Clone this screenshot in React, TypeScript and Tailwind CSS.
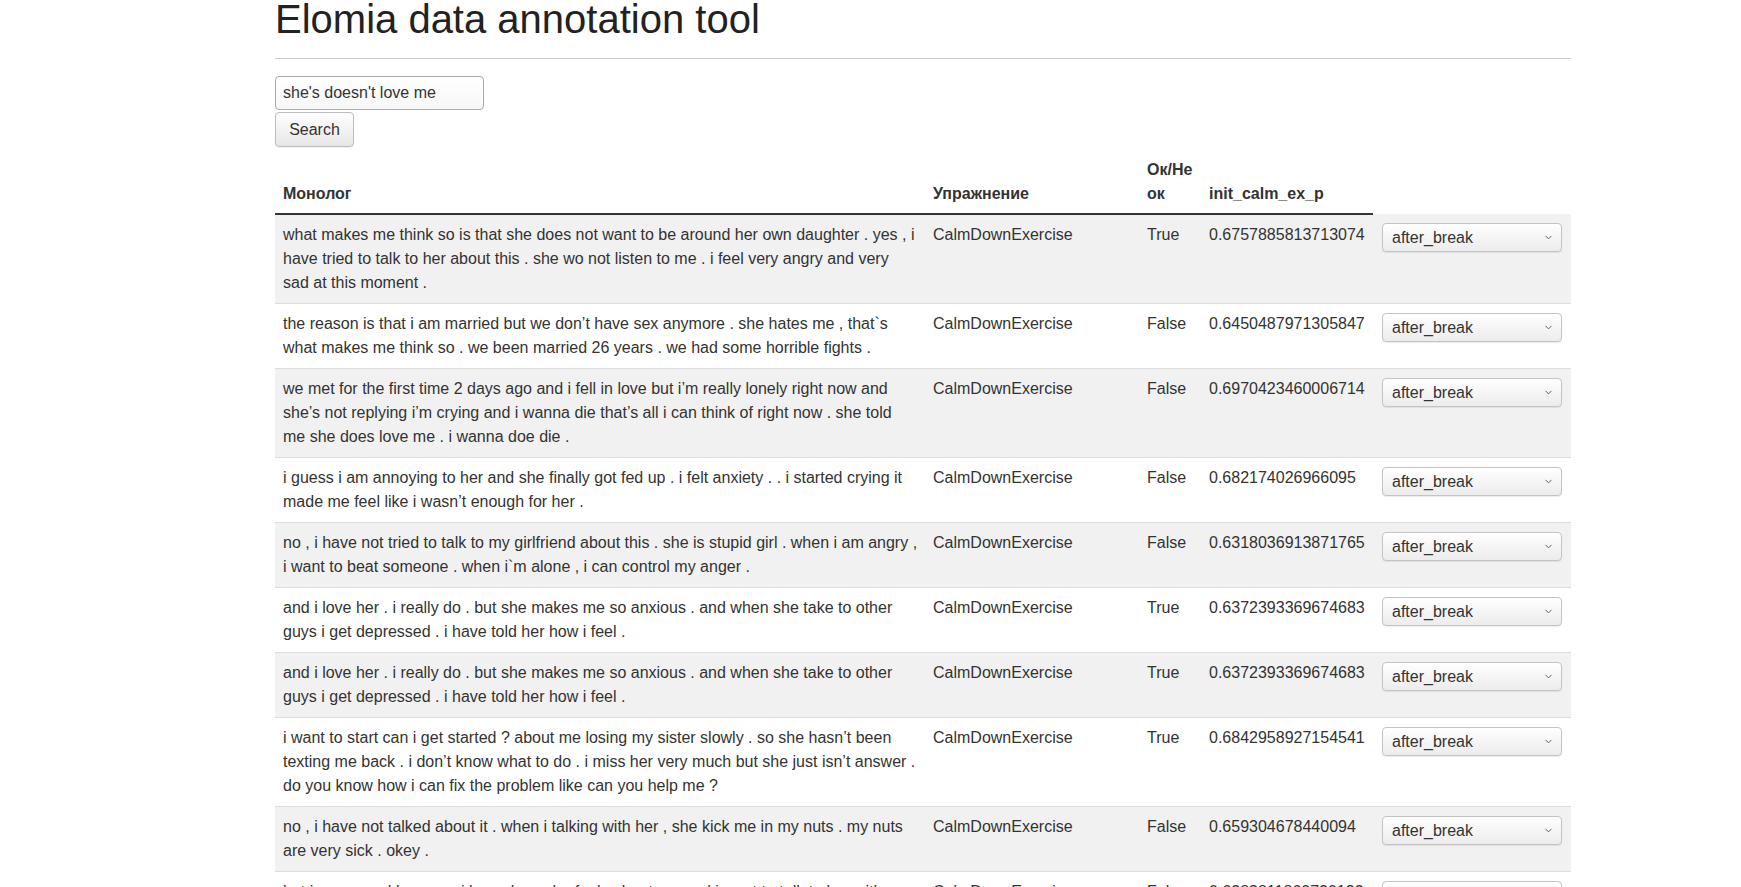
import { ChevronDown } from "lucide-react";

const rows = [
  {
    text: "what makes me think so is that she does not want to be around her own daughter . yes , i have tried to talk to her about this . she wo not listen to me . i feel very angry and very sad at this moment .",
    ok: "True",
    p: "0.6757885813713074",
  },
  {
    text: "the reason is that i am married but we don’t have sex anymore . she hates me , that`s what makes me think so . we been married 26 years . we had some horrible fights .",
    ok: "False",
    p: "0.6450487971305847",
  },
  {
    text: "we met for the first time 2 days ago and i fell in love but i’m really lonely right now and she’s not replying i’m crying and i wanna die that’s all i can think of right now . she told me she does love me . i wanna doe die .",
    ok: "False",
    p: "0.6970423460006714",
  },
  {
    text: "i guess i am annoying to her and she finally got fed up . i felt anxiety . . i started crying it made me feel like i wasn’t enough for her .",
    ok: "False",
    p: "0.682174026966095",
  },
  {
    text: "no , i have not tried to talk to my girlfriend about this . she is stupid girl . when i am angry , i want to beat someone . when i`m alone , i can control my anger .",
    ok: "False",
    p: "0.6318036913871765",
  },
  {
    text: "and i love her . i really do . but she makes me so anxious . and when she take to other guys i get depressed . i have told her how i feel .",
    ok: "True",
    p: "0.6372393369674683",
  },
  {
    text: "and i love her . i really do . but she makes me so anxious . and when she take to other guys i get depressed . i have told her how i feel .",
    ok: "True",
    p: "0.6372393369674683",
  },
  {
    text: "i want to start can i get started ? about me losing my sister slowly . so she hasn’t been texting me back . i don’t know what to do . i miss her very much but she just isn’t answer . do you know how i can fix the problem like can you help me ?",
    ok: "True",
    p: "0.6842958927154541",
  },
  {
    text: "no , i have not talked about it . when i talking with her , she kick me in my nuts . my nuts are very sick . okey .",
    ok: "False",
    p: "0.659304678440094",
  },
  {
    text: "but i am so sad because i know how she feels about me and i want to talk to her with my friends . she does not care about me .",
    ok: "False",
    p: "0.6383811860730133",
  },
];

function BreakSelect() {
  return (
    <div className="relative ml-[1px] mt-[1px] w-[180px]">
      <select
        defaultValue="after_break"
        className="block w-full h-[29px] appearance-none rounded-[4px] border border-[#c4c4c4] bg-linear-to-b from-white to-[#ececec] pl-[9px] pr-6 text-[16px] leading-[27px] text-[#333] shadow-[0_1px_1px_rgba(0,0,0,0.08)] outline-none"
      >
        <option value="after_break">after_break</option>
        <option value="before_break">before_break</option>
      </select>
      <ChevronDown
        size={11}
        strokeWidth={2}
        className="pointer-events-none absolute right-[8px] top-[9px] text-[#555]"
      />
    </div>
  );
}

export default function App() {
  return (
    <div className="min-h-screen bg-white font-['Liberation_Sans',Arial,sans-serif] text-[16px] leading-[24px] text-[#333]">
      <div className="ml-[275px] w-[1296px]">
        {/* Header */}
        <h1 className="-mt-[3px] text-[40px] leading-[44px] font-normal text-[#222]">
          Elomia data annotation tool
        </h1>
        <hr className="mt-[17px] border-0 border-t border-[#cccccc]" />

        {/* Search */}
        <div className="mt-[17px] flex flex-col items-start gap-[2px]">
          <input
            type="text"
            defaultValue="she's doesn't love me"
            className="h-[34px] w-[209px] rounded-[4px] border border-[#a9a9a9] bg-linear-to-b from-white to-[#f7f7f7] px-[7px] text-[16px] text-[#333] outline-none"
          />
          <button className="h-[35px] w-[79px] rounded-[4px] border border-[#bdbdbd] bg-linear-to-b from-white to-[#e6e6e6] pt-[1px] text-[16px] text-[#333] shadow-[0_1px_1px_rgba(0,0,0,0.06)]">
            Search
          </button>
        </div>

        {/* Table */}
        <table className="mt-[2px] w-full table-fixed border-collapse">
          <colgroup>
            <col className="w-[650px]" />
            <col className="w-[214px]" />
            <col className="w-[62px]" />
            <col className="w-[172px]" />
            <col className="w-[198px]" />
          </colgroup>
          <thead>
            <tr>
              <th className="border-b-2 border-[#333] px-[8px] pt-[9px] pb-[7px] text-left align-bottom font-bold">
                Монолог
              </th>
              <th className="border-b-2 border-[#333] px-[8px] pt-[9px] pb-[7px] text-left align-bottom font-bold">
                Упражнение
              </th>
              <th className="border-b-2 border-[#333] px-[8px] pt-[9px] pb-[7px] text-left align-bottom font-bold">
                Ок/Не ок
              </th>
              <th className="border-b-2 border-[#333] px-[8px] pt-[9px] pb-[7px] text-left align-bottom font-bold">
                init_calm_ex_p
              </th>
              <th className="p-[8px]"></th>
            </tr>
          </thead>
          <tbody>
            {rows.map((row, index) => (
              <tr
                key={index}
                className={`${index % 2 === 0 ? "bg-[#f1f1f1]" : "bg-white"} ${index > 0 ? "border-t border-[#dddddd]" : ""}`}
              >
                <td className="py-[8px] pl-[8px] pr-[7px] align-top">{row.text}</td>
                <td className="p-[8px] align-top">CalmDownExercise</td>
                <td className="p-[8px] align-top">{row.ok}</td>
                <td className="p-[8px] align-top">{row.p}</td>
                <td className="p-[8px] align-top">
                  <BreakSelect />
                </td>
              </tr>
            ))}
          </tbody>
        </table>
      </div>
    </div>
  );
}
